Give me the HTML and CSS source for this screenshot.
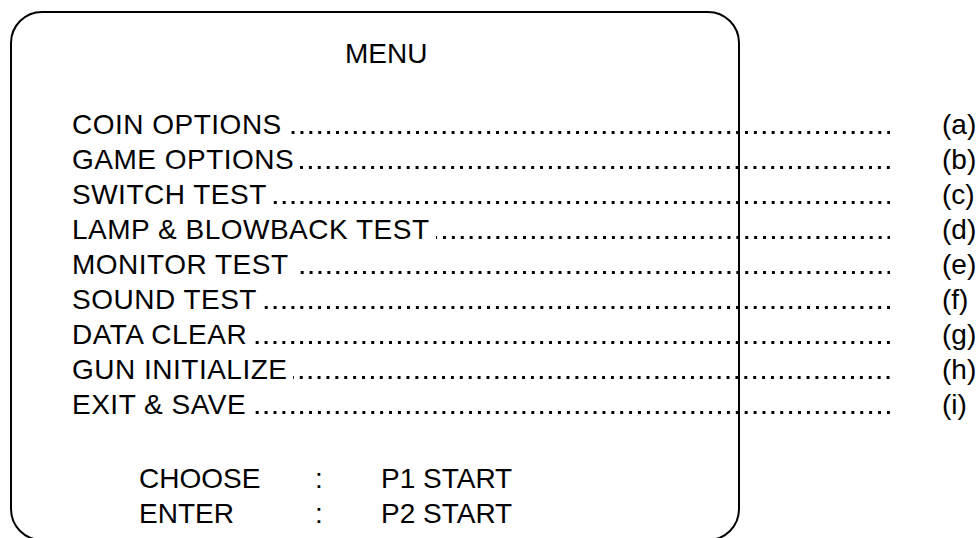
FILE: index.html
```html
<!DOCTYPE html>
<html lang="en">
<head>
<meta charset="utf-8">
<title>MENU</title>
<link rel="stylesheet" href="styles.css">
</head>
<body>
<div class="frame">
  <div class="title">MENU</div>
  <ul class="menu">
    <li class="row"><span class="label">COIN OPTIONS</span><span class="dots"></span><span class="key">(a)</span></li>
    <li class="row"><span class="label">GAME OPTIONS</span><span class="dots"></span><span class="key">(b)</span></li>
    <li class="row"><span class="label">SWITCH TEST</span><span class="dots"></span><span class="key">(c)</span></li>
    <li class="row"><span class="label">LAMP &amp; BLOWBACK TEST</span><span class="dots"></span><span class="key">(d)</span></li>
    <li class="row"><span class="label">MONITOR TEST</span><span class="dots"></span><span class="key">(e)</span></li>
    <li class="row"><span class="label">SOUND TEST</span><span class="dots"></span><span class="key">(f)</span></li>
    <li class="row"><span class="label">DATA CLEAR</span><span class="dots"></span><span class="key">(g)</span></li>
    <li class="row"><span class="label">GUN INITIALIZE</span><span class="dots"></span><span class="key">(h)</span></li>
    <li class="row"><span class="label">EXIT &amp; SAVE</span><span class="dots"></span><span class="key">(i)</span></li>
  </ul>
  <div class="controls">
    <span>CHOOSE</span><span>:</span><span>P1 START</span>
    <span>ENTER</span><span>:</span><span>P2 START</span>
  </div>
</div>
</body>
</html>
```

FILE: styles.css
```css
html, body {
  margin: 0;
  padding: 0;
  overflow: hidden;
  background: #fff;
}

body {
  font-family: "Liberation Sans", Arial, sans-serif;
  font-size: 28px;
  line-height: 35px;
  color: #000;
}

.frame {
  box-sizing: border-box;
  margin: 11px 0 0 10px;
  width: 730px;
  height: 530px;
  border: 2px solid #000;
  border-radius: 32px;
  padding-top: 23px;
}

.title {
  margin-left: 333px;
}

.menu {
  list-style: none;
  margin: 36px 0 0 60px;
  padding: 0;
  width: 904px;
}

.row {
  display: flex;
  white-space: nowrap;
}

.label {
  flex: none;
  letter-spacing: 0.5px;
  padding-right: 6px;
}

.dots {
  flex: 1;
  min-width: 0;
  background-image: linear-gradient(to right, transparent 5.9px, #000 5.9px);
  background-size: 8.9px 3px;
  background-repeat: repeat-x;
  background-position: right 0 top 24px;
}

.key {
  flex: none;
  margin-left: 52px;
  width: 34px;
}

.controls {
  display: grid;
  grid-template-columns: 176px 66px auto;
  margin: 39px 0 0 127px;
}
```
